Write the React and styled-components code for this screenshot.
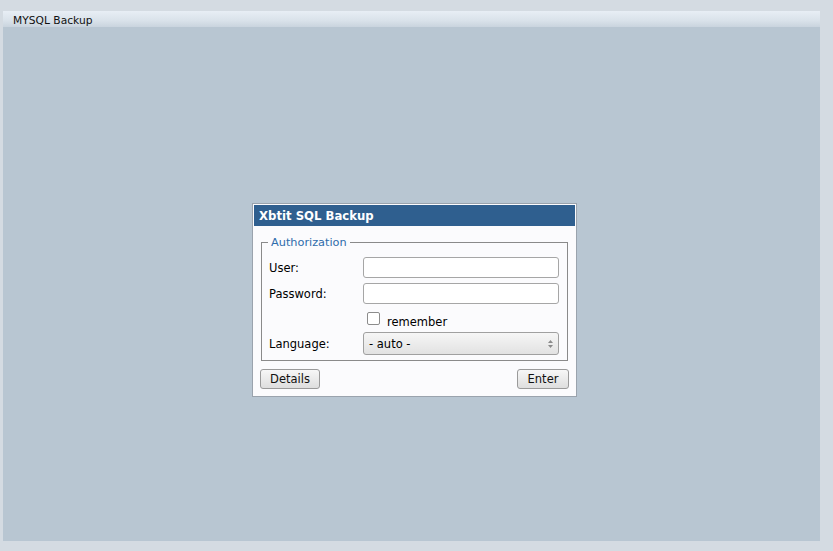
import React from "react";
import styled, { createGlobalStyle } from "styled-components";

const Global = createGlobalStyle`
  html, body { margin: 0; padding: 0; background: #d4dbe2; }
  body { font-family: "DejaVu Sans", Verdana, sans-serif; font-size: 11.5px; color: #000; }
`;

const Page = styled.div`
  width: 833px;
  height: 551px;
  padding: 11px 13px 0 3px;
  box-sizing: border-box;
`;

const Panel = styled.div`
  width: 817px;
  height: 530px;
  background: #b8c6d2;
  display: flex;
  flex-direction: column;
`;

const PanelHeader = styled.div`
  height: 16px;
  padding-left: 10px;
  line-height: 20px;
  font-size: 10.7px;
  background: linear-gradient(#e8eef5, #d9e2ea 60%, #c9d4de);
  color: #111;
`;

const PanelBody = styled.div`
  flex: 1;
  padding: 176px 0 0 249px;
`;

const Dialog = styled.div`
  width: 321px;
  height: 190px;
  border: 1px solid #9aa3ad;
  background: #fbfbfd;
  padding: 1px;
  box-sizing: content-box;
  display: flex;
  flex-direction: column;
`;

const TitleBar = styled.div`
  height: 21px;
  background: #2f5f8f;
  color: #fff;
  font-weight: bold;
  font-size: 11.7px;
  line-height: 22px;
  padding-left: 5px;
`;

const Fieldset = styled.fieldset`
  margin: 10px 7px 0 7px;
  padding: 8px 7px 5px 7px;
  border: 1px solid #8a8a8a;
`;

const Legend = styled.legend`
  color: #2e6cab;
  padding: 0 3px;
  margin-left: -1px;
  font-size: 11.3px;
  line-height: 13px;
`;

const Grid = styled.div`
  display: grid;
  grid-template-columns: 94px 196px;
  row-gap: 5px;
  align-items: center;
`;

const Label = styled.label`
  font-size: 11.5px;
`;

const TextInput = styled.input`
  width: 196px;
  height: 21px;
  box-sizing: border-box;
  border: 1px solid #a6a6a6;
  border-radius: 3px;
  background: #fff;
  margin: 0;
`;

const Remember = styled.div`
  grid-column: 2;
  display: flex;
  align-items: center;
  gap: 7px;
  padding-left: 4px;
  height: 18px;
`;

const Check = styled.span`
  width: 11px;
  height: 11px;
  border: 1px solid #8c8c8c;
  border-radius: 2px;
  background: #fff;
  display: inline-block;
  margin-top: 0px;
`;

const RememberText = styled.span`
  margin-top: 7px;
  font-size: 11.5px;
`;

const Select = styled.div`
  width: 196px;
  height: 23px;
  box-sizing: border-box;
  border: 1px solid #a0a0a0;
  border-radius: 3px;
  background: linear-gradient(#f6f6f6, #e2e2e2);
  display: flex;
  align-items: center;
  justify-content: space-between;
  padding: 0 4px 0 5px;
  font-size: 11.5px;
`;

const Arrows = styled.svg`
  width: 7px;
  height: 12px;
`;

const Footer = styled.div`
  display: flex;
  justify-content: space-between;
  padding: 8px 6px 0 6px;
`;

const Button = styled.button`
  height: 20px;
  width: ${(p) => p.$w}px;
  box-sizing: border-box;
  border: 1px solid #9a9a9a;
  border-radius: 3px;
  background: linear-gradient(#f7f7f7, #dedede);
  font-family: "DejaVu Sans", Verdana, sans-serif;
  font-size: 11.5px;
  color: #111;
  padding: 0;
`;

export default function App() {
  return (
    <>
      <Global />
      <Page>
        <Panel>
          <PanelHeader>MYSQL Backup</PanelHeader>
          <PanelBody>
            <Dialog>
              <TitleBar>Xbtit SQL Backup</TitleBar>
              <Fieldset>
                <Legend>Authorization</Legend>
                <Grid>
                  <Label>User:</Label>
                  <TextInput type="text" />
                  <Label>Password:</Label>
                  <TextInput type="password" />
                  <Remember>
                    <Check />
                    <RememberText>remember</RememberText>
                  </Remember>
                  <Label>Language:</Label>
                  <Select>
                    <span>- auto -</span>
                    <Arrows viewBox="0 0 7 12">
                      <path d="M3.5 2 L6 5 H1 Z" fill="#8a8a8a" />
                      <path d="M3.5 10 L6 7 H1 Z" fill="#8a8a8a" />
                    </Arrows>
                  </Select>
                </Grid>
              </Fieldset>
              <Footer>
                <Button $w={60}>Details</Button>
                <Button $w={52}>Enter</Button>
              </Footer>
            </Dialog>
          </PanelBody>
        </Panel>
      </Page>
    </>
  );
}
